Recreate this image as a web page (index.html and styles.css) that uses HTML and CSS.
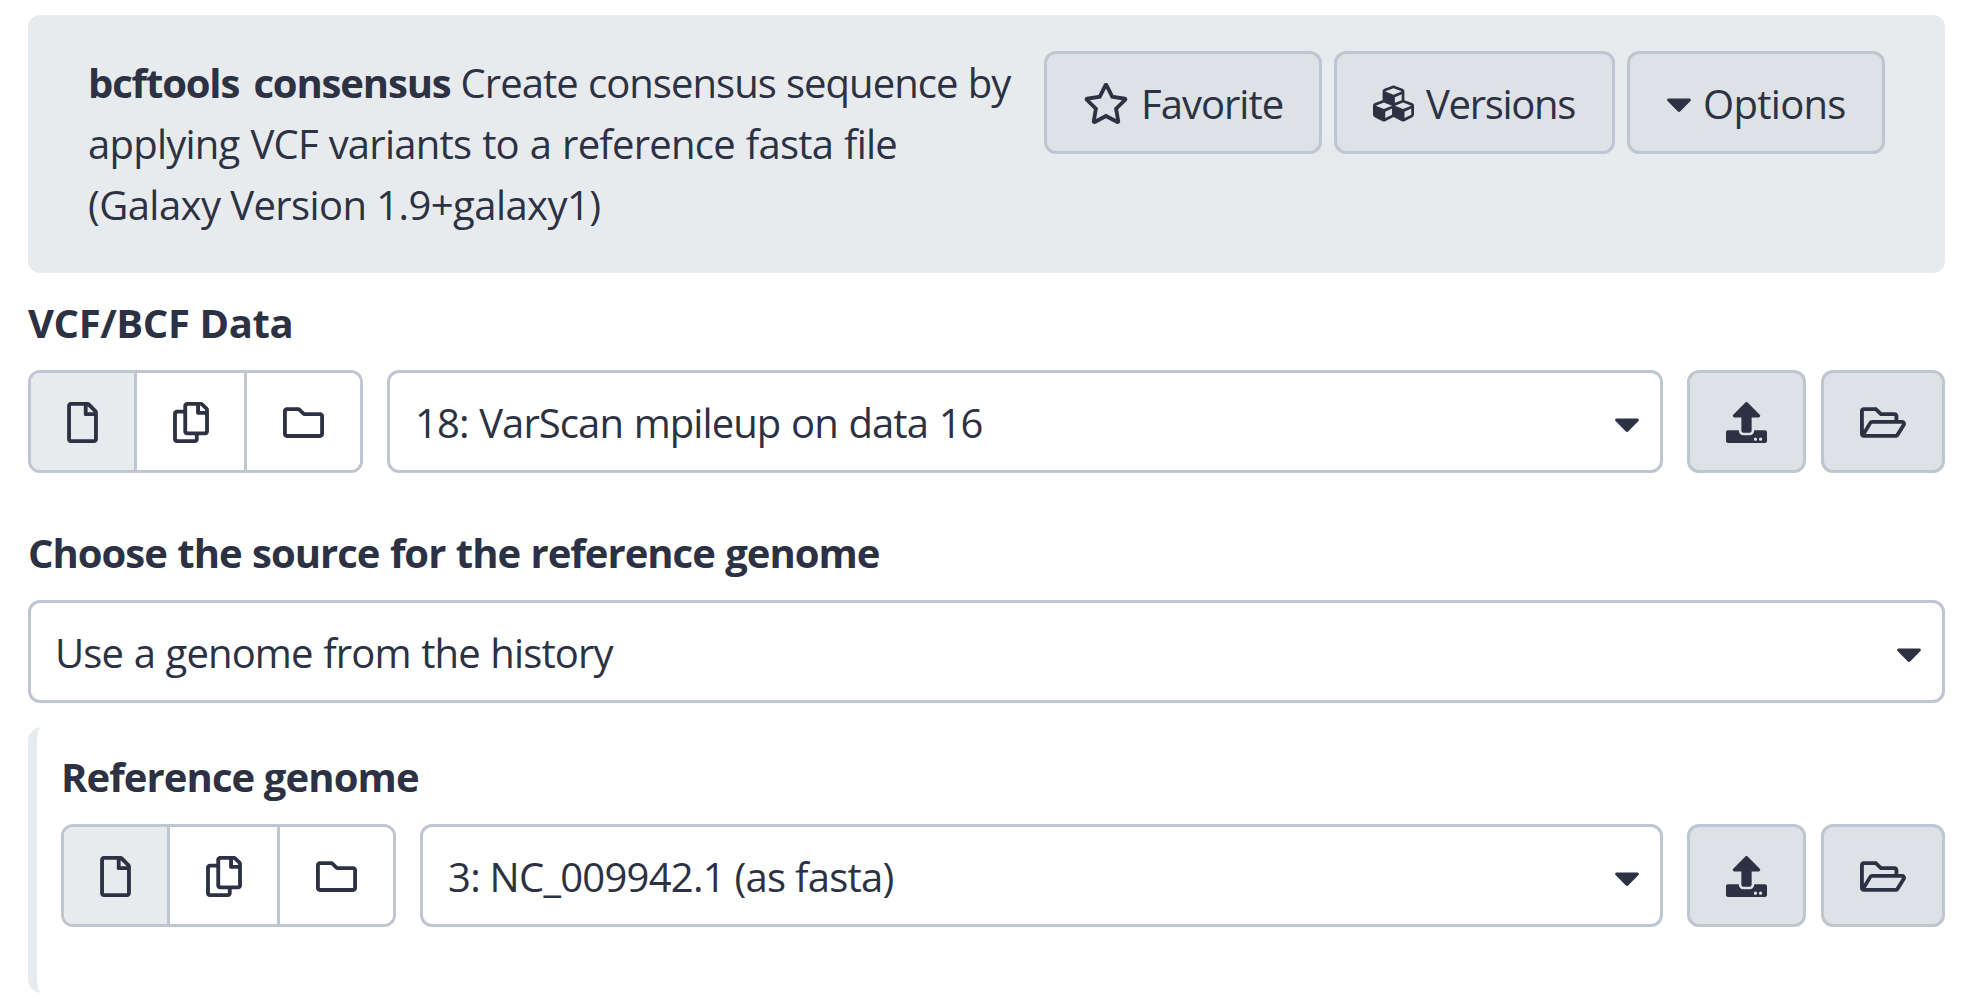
FILE: index.html
```html
<!DOCTYPE html>
<html lang="en">
<head>
<meta charset="utf-8">
<title>bcftools consensus</title>
<link rel="stylesheet" href="styles.css">
</head>
<body>
<svg class="sprite" aria-hidden="true">
  <symbol id="star" viewBox="0 0 576 512"><path d="M528.1 171.5L382 150.2 316.7 17.8c-11.7-23.6-45.6-23.9-57.4 0L194 150.2 47.9 171.5c-26.2 3.8-36.7 36.1-17.7 54.6l105.7 103-25 145.5c-4.5 26.3 23.2 46 46.4 33.7L288 439.6l130.7 68.7c23.2 12.2 50.9-7.4 46.4-33.7l-25-145.5 105.7-103c19-18.5 8.5-50.8-17.7-54.6zM388.6 312.3l23.7 138.4L288 385.4l-124.3 65.3 23.7-138.4-100.6-98 139-20.2 62.2-126 62.2 126 139 20.2-100.6 98z"/></symbol>
  <symbol id="cubes" viewBox="0 0 512 512"><path d="M488.6 250.2L392 214V105.5c0-15-9.3-28.4-23.4-33.7l-100-37.5c-8.1-3.1-17.1-3.1-25.3 0l-100 37.5c-14.1 5.3-23.4 18.7-23.4 33.7V214l-96.6 36.2C9.3 255.5 0 268.9 0 283.9V394c0 13.6 7.7 26.1 19.9 32.2l100 50c10.1 5.1 22.1 5.1 32.2 0l103.9-52 103.9 52c10.1 5.1 22.1 5.1 32.2 0l100-50c12.2-6.1 19.9-18.6 19.9-32.2V283.9c0-15-9.3-28.4-23.4-33.7zM358 214.8l-85 31.9v-68.2l85-37v73.3zM154 104.1l102-38.2 102 38.2v.6l-102 41.4-102-41.4v-.6zm84 291.1l-85 42.5v-79.1l85-38.8v75.4zm0-112l-102 41.4-102-41.4v-.6l102-38.2 102 38.2v.6zm240 112l-85 42.5v-79.1l85-38.8v75.4zm0-112l-102 41.4-102-41.4v-.6l102-38.2 102 38.2v.6z"/></symbol>
  <symbol id="caret" viewBox="0 0 320 512"><path d="M31.3 192h257.3c17.8 0 26.7 21.5 14.1 34.1L174.1 354.8c-7.8 7.8-20.5 7.8-28.3 0L17.2 226.1C4.6 213.5 13.5 192 31.3 192z"/></symbol>
  <symbol id="file" viewBox="0 0 384 512"><path d="M369.9 97.9L286 14C277 5 264.8-.1 252.1-.1H48C21.5 0 0 21.5 0 48v416c0 26.5 21.5 48 48 48h288c26.5 0 48-21.5 48-48V131.9c0-12.7-5.1-25-14.1-34zM332.1 128H256V51.9l76.1 76.1zM48 464V48h160v104c0 13.3 10.7 24 24 24h104v288H48z"/></symbol>
  <symbol id="copy" viewBox="0 0 448 512"><path d="M433.941 65.941l-51.882-51.882A48 48 0 0 0 348.118 0H176c-26.51 0-48 21.49-48 48v48H48c-26.51 0-48 21.49-48 48v320c0 26.51 21.49 48 48 48h224c26.51 0 48-21.49 48-48v-48h80c26.51 0 48-21.49 48-48V99.882a48 48 0 0 0-14.059-33.941zM266 464H54a6 6 0 0 1-6-6V150a6 6 0 0 1 6-6h74v224c0 26.51 21.49 48 48 48h96v42a6 6 0 0 1-6 6zm128-96H182a6 6 0 0 1-6-6V54a6 6 0 0 1 6-6h106v88c0 13.255 10.745 24 24 24h88v202a6 6 0 0 1-6 6zm6-256h-64V48h9.632c1.591 0 3.117.632 4.243 1.757l48.368 48.368a6 6 0 0 1 1.757 4.243V112z"/></symbol>
  <symbol id="folder" viewBox="0 0 512 512"><path d="M464 128H272l-54.63-54.63c-6-6-14.14-9.37-22.63-9.37H48C21.49 64 0 85.49 0 112v288c0 26.51 21.49 48 48 48h416c26.51 0 48-21.49 48-48V176c0-26.51-21.49-48-48-48zm0 272H48V112h140.12l54.63 54.63c6 6 14.14 9.37 22.63 9.37H464v224z"/></symbol>
  <symbol id="folder-open" viewBox="0 0 576 512"><path d="M527.9 224H480v-48c0-26.5-21.5-48-48-48H272l-64-64H48C21.5 64 0 85.5 0 112v288c0 26.5 21.5 48 48 48h400c16.5 0 31.9-8.5 40.7-22.6l79.9-128c20-31.9-3-73.4-40.7-73.4zM48 118c0-3.3 2.7-6 6-6h134.1l64 64H426c3.3 0 6 2.7 6 6v42H152c-16.8 0-32.4 8.8-41.1 23.2L48 351.4zm400 282H72l77.2-128H528z"/></symbol>
  <symbol id="upload" viewBox="0 0 512 512"><path d="M296 384h-80c-13.3 0-24-10.7-24-24V192h-87.7c-17.8 0-26.7-21.5-14.1-34.1L242.3 5.7c7.5-7.5 19.8-7.5 27.3 0l152.2 152.2c12.6 12.6 3.7 34.1-14.1 34.1H320v168c0 13.3-10.7 24-24 24zm216-8v112c0 13.3-10.7 24-24 24H24c-13.3 0-24-10.7-24-24V376c0-13.3 10.7-24 24-24h136v8c0 30.9 25.1 56 56 56h80c30.9 0 56-25.1 56-56v-8h136c13.3 0 24 10.7 24 24zm-124 88c0-11-9-20-20-20s-20 9-20 20 9 20 20 20 20-9 20-20zm64 0c0-11-9-20-20-20s-20 9-20 20 9 20 20 20 20-9 20-20z"/></symbol>
</svg>
<main class="page">
  <header class="tool-header">
    <h1 class="tool-title">
      <span class="line line-name"><b class="t-name">bcftools consensus</b><span class="t-l1">Create consensus sequence by</span></span>
      <span class="line"><span class="t-l2">applying VCF variants to a reference fasta file</span></span>
      <span class="line"><span class="t-l3">(Galaxy Version 1.9+galaxy1)</span></span>
    </h1>
    <div class="actions">
      <button class="btn btn-favorite"><svg class="icon w-576"><use href="#star"/></svg><span class="t-fav">Favorite</span></button>
      <button class="btn btn-versions"><svg class="icon w-512"><use href="#cubes"/></svg><span class="t-ver">Versions</span></button>
      <button class="btn btn-options"><svg class="icon w-320"><use href="#caret"/></svg><span class="t-opt">Options</span></button>
    </div>
  </header>

  <section class="field field-data">
    <h2 class="label"><span class="t-vcf">VCF/BCF Data</span></h2>
    <div class="row">
      <div class="group">
        <button class="seg seg-file active"><svg class="icon w-384"><use href="#file"/></svg></button>
        <button class="seg seg-copy"><svg class="icon w-448"><use href="#copy"/></svg></button>
        <button class="seg seg-folder"><svg class="icon w-512"><use href="#folder"/></svg></button>
      </div>
      <div class="select"><span class="t-18">18: VarScan mpileup on data 16</span><svg class="icon w-320"><use href="#caret"/></svg></div>
      <div class="tools">
        <button class="btn btn-upload"><svg class="icon w-512"><use href="#upload"/></svg></button>
        <button class="btn btn-browse"><svg class="icon w-576"><use href="#folder-open"/></svg></button>
      </div>
    </div>
  </section>

  <section class="field field-source">
    <h2 class="label"><span class="t-src">Choose the source for the reference genome</span></h2>
    <div class="row">
      <div class="select select-wide"><span class="t-use">Use a genome from the history</span><svg class="icon w-320"><use href="#caret"/></svg></div>
    </div>
  </section>

  <section class="nested">
    <h2 class="label"><span class="t-ref">Reference genome</span></h2>
    <div class="row">
      <div class="group">
        <button class="seg seg-file active"><svg class="icon w-384"><use href="#file"/></svg></button>
        <button class="seg seg-copy"><svg class="icon w-448"><use href="#copy"/></svg></button>
        <button class="seg seg-folder"><svg class="icon w-512"><use href="#folder"/></svg></button>
      </div>
      <div class="select"><span class="t-3">3: NC_009942.1 (as fasta)</span><svg class="icon w-320"><use href="#caret"/></svg></div>
      <div class="tools">
        <button class="btn btn-upload"><svg class="icon w-512"><use href="#upload"/></svg></button>
        <button class="btn btn-browse"><svg class="icon w-576"><use href="#folder-open"/></svg></button>
      </div>
    </div>
  </section>
</main>
</body>
</html>
```

FILE: styles.css
```css
* { box-sizing: border-box; }
body {
  margin: 0;
  background: #fff;
  color: #2c3143;
  font-family: "Open Sans", "Noto Sans", sans-serif;
  font-size: 40px;
  line-height: 61px;
}
.sprite { display: none; }
.page {
  display: flex;
  flex-direction: column;
  width: 1979px;
  height: 999px;
  padding: 15px 34px 0 28px;
  overflow: hidden;
}
.tool-header {
  display: flex;
  justify-content: space-between;
  height: 258px;
  padding: 36px 60px 0;
  border-radius: 12px;
  background: #e7ebee;
}
.tool-title {
  display: flex;
  flex: 1;
  flex-direction: column;
  min-width: 0;
  margin: 1px 0 0;
  font: inherit;
}
.line-name { display: flex; gap: 10px; }
.line, .label, .select span, .btn span { white-space: nowrap; }
.actions { display: flex; gap: 12px; }
.btn {
  display: flex;
  align-items: center;
  justify-content: center;
  height: 103px;
  padding: 2px 0 0;
  border: 3px solid #bdc6d1;
  border-radius: 12px;
  background: #dee1e6;
  color: inherit;
  font: inherit;
}
.actions .btn { justify-content: flex-start; padding-left: 36px; }
.btn-favorite { width: 278px; gap: 12px; }
.btn-versions { width: 281px; gap: 12px; }
.btn-options { width: 258px; gap: 11px; }
.icon { display: block; flex: none; height: 41px; fill: currentColor; }
.w-320 { width: 26px; }
.w-384 { width: 31px; }
.w-448 { width: 36px; }
.w-512 { width: 41px; }
.w-576 { width: 46px; }
.label { margin: 0 0 17px; font-size: 40px; font-weight: 700; line-height: 61px; }
.field-data { padding-top: 19px; }
.field-source { padding-top: 49px; }
.row { display: flex; gap: 24px; height: 103px; }
.group { display: flex; border: 3px solid #bdc6d1; border-radius: 12px; overflow: hidden; }
.seg {
  display: flex;
  align-items: center;
  justify-content: center;
  padding: 2px 0 0;
  border: 0;
  background: #fff;
  color: inherit;
}
.seg + .seg { border-left: 3px solid #bdc6d1; }
.seg.active { background: #e7ebee; }
.seg-file { width: 103px; }
.seg-copy { width: 110px; }
.seg-folder { width: 116px; }
.select {
  display: flex;
  flex: 1;
  align-items: center;
  justify-content: space-between;
  padding: 2px 20px 0 25px;
  border: 3px solid #bdc6d1;
  border-radius: 12px;
}
.select .icon { margin-top: 2px; }
.select-wide { padding-left: 24px; }
.tools { display: flex; gap: 15px; }
.btn-upload { width: 119px; }
.btn-browse { width: 124px; }
.nested {
  height: 266px;
  margin-top: 24px;
  padding: 19px 0 0 24px;
  border-left: 9px solid #e7ebee;
  border-radius: 14px;
}

/* Tracking per text run */
.t-name { letter-spacing: -1.15px; word-spacing: 5px; }
.t-l1 { letter-spacing: -0.95px; word-spacing: 0.7px; }
.t-l2 { letter-spacing: -0.76px; word-spacing: 1.2px; }
.t-l3 { letter-spacing: -0.58px; }
.t-fav { letter-spacing: -0.98px; }
.t-ver { letter-spacing: -1.3px; }
.t-opt { letter-spacing: -0.7px; }
.t-vcf { letter-spacing: -0.4px; }
.t-18 { letter-spacing: -0.92px; word-spacing: 1.2px; }
.t-src { letter-spacing: -1px; word-spacing: 1.1px; }
.t-use { letter-spacing: -0.86px; word-spacing: 1px; }
.t-ref { letter-spacing: -0.9px; }
.t-3 { letter-spacing: -0.74px; }
```
